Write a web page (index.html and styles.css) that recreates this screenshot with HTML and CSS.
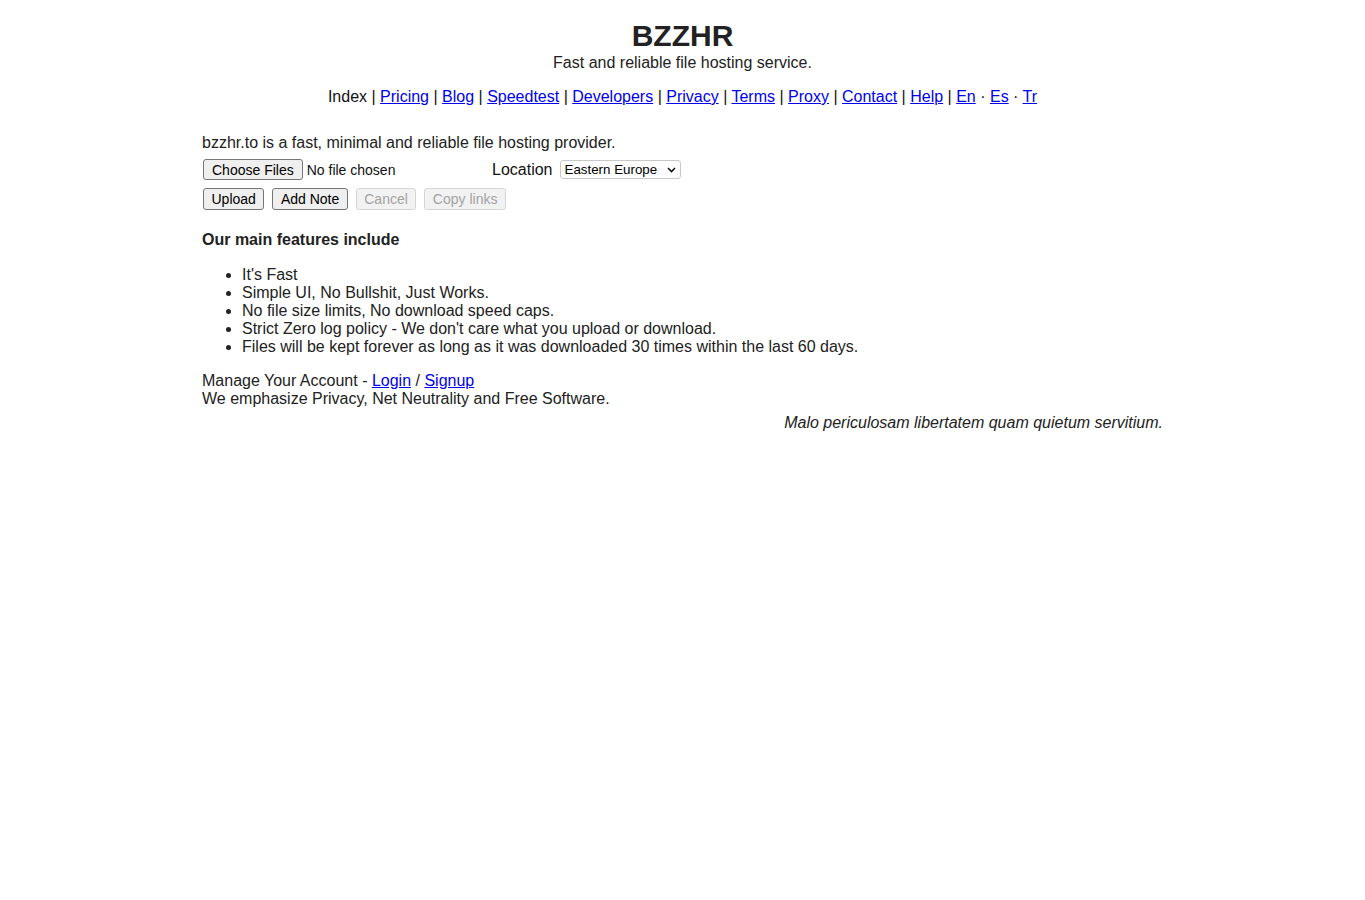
FILE: index.html
```html
<!DOCTYPE html>
<html lang="en">
<head>
<meta charset="utf-8">
<title>BZZHR</title>
<link rel="stylesheet" href="styles.css">
</head>
<body>
<header class="header">
  <h1 class="title">BZZHR</h1>
  <div class="subtitle">Fast and reliable file hosting service.</div>
  <nav class="nav">Index | <a href="#">Pricing</a> | <a href="#">Blog</a> | <a href="#">Speedtest</a> | <a href="#">Developers</a> | <a href="#">Privacy</a> | <a href="#">Terms</a> | <a href="#">Proxy</a> | <a href="#">Contact</a> | <a href="#">Help</a> | <a href="#">En</a> · <a href="#">Es</a> · <a href="#">Tr</a></nav>
</header>
<main class="main">
  <p class="intro">bzzhr.to is a fast, minimal and reliable file hosting provider.</p>
  <div class="row row-file">
    <div class="file">
      <button class="btn" type="button">Choose Files</button>
      <span class="file-status">No file chosen</span>
    </div>
    <label class="loc-label">Location</label>
    <div class="select-wrap">
      <span class="select-text">Eastern Europe</span>
      <svg class="chev" width="9" height="6" viewBox="0 0 9 6"><path d="M1 1 L4.5 4.5 L8 1" fill="none" stroke="#111" stroke-width="1.6"/></svg>
    </div>
  </div>
  <div class="row row-btns">
    <button class="btn" type="button">Upload</button>
    <button class="btn" type="button">Add Note</button>
    <button class="btn" type="button" disabled>Cancel</button>
    <button class="btn" type="button" disabled>Copy links</button>
  </div>
  <h4 class="features-title">Our main features include</h4>
  <ul class="features">
    <li>It's Fast</li>
    <li>Simple UI, No Bullshit, Just Works.</li>
    <li>No file size limits, No download speed caps.</li>
    <li>Strict Zero log policy - We don't care what you upload or download.</li>
    <li>Files will be kept forever as long as it was downloaded 30 times within the last 60 days.</li>
  </ul>
  <p class="account">Manage Your Account - <a href="#">Login</a> / <a href="#">Signup</a><br>We emphasize Privacy, Net Neutrality and Free Software.</p>
  <p class="quote">Malo periculosam libertatem quam quietum servitium.</p>
</main>
</body>
</html>
```
FILE: styles.css
```css
html, body {
  margin: 0;
  padding: 0;
  background: #fff;
}
body {
  font-family: "Liberation Sans", Arial, sans-serif;
  font-size: 16px;
  line-height: 18px;
  color: #222;
}
a { color: #00e; text-decoration: underline; }

.header {
  text-align: center;
  padding-top: 18px;
}
.title {
  margin: 0;
  font-size: 30px;
  line-height: 36px;
  font-weight: bold;
  color: #222;
}
.subtitle {
  margin: 0;
}
.nav {
  margin-top: 16px;
  color: #111;
}

.main {
  width: 961px;
  margin: 28px auto 0;
}
.intro {
  margin: 0;
}
.row {
  display: flex;
  align-items: center;
}
.row-file {
  margin-top: 7px;
  height: 21px;
}
.file {
  display: flex;
  align-items: center;
  width: 290px;
}
.btn {
  font-family: "Liberation Sans", Arial, sans-serif;
  font-size: 14px;
  line-height: 16px;
  height: 22px;
  padding: 1px 7.5px;
  margin: 0 0 0 1px;
  border: 1px solid #767676;
  border-radius: 3px;
  background: #efefef;
  color: #000;
}
.row-file .btn { height: 21px; padding: 1px 8px; }
.btn:disabled {
  color: #a3a3a3;
  border-color: #d5d5d5;
  background: #f2f2f2;
}
.file-status {
  font-size: 14px;
  margin-left: 4px;
  color: #111;
}
.loc-label {
  margin-right: 7px;
  color: #111;
}
.select-wrap {
  display: flex;
  align-items: center;
  justify-content: space-between;
  box-sizing: border-box;
  width: 121px;
  height: 19px;
  padding: 0 4px 0 4px;
  border: 1px solid #c8c8c8;
  border-radius: 3px;
  font-size: 13.33px;
  color: #000;
}
.row-btns {
  margin-top: 8px;
  gap: 7px;
}
.features-title {
  margin: 21px 0 0;
  font-size: 16px;
  font-weight: bold;
}
.features {
  margin: 17px 0 0;
  padding-left: 40px;
}
.account {
  margin: 16px 0 0;
}
.quote {
  margin: 6px 0 0;
  text-align: right;
  font-style: italic;
}
```
